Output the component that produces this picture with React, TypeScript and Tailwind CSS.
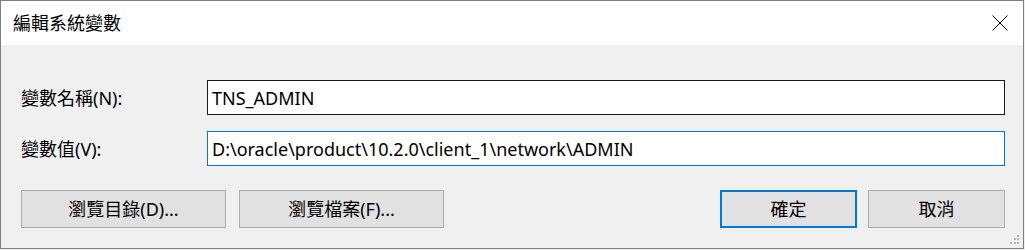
import React from "react";

const FONT = {
  fontFamily: '"Noto Sans", "Noto Sans CJK TC", sans-serif',
};

function CloseIcon() {
  return (
    <svg width="16" height="16" viewBox="0 0 16 16" className="block">
      <path d="M0.5 0.5 L15.5 15.5 M15.5 0.5 L0.5 15.5" stroke="#000" strokeWidth="1" fill="none" />
    </svg>
  );
}

export default function App() {
  const path = "D:\\oracle\\product\\10.2.0\\client_1\\network\\ADMIN";
  return (
    <div className="w-[1025px] h-[250px] bg-[#f0f0f0] text-black" style={FONT}>
      <div className="relative w-[1024px] h-[249px] border border-[#7f7f7f] flex flex-col bg-[#f0f0f0]">
        {/* title bar */}
        <div className="h-[44px] bg-white flex items-center justify-between">
          <div className="pl-[12px] text-[18px] leading-[22px] pt-[0px]">編輯系統變數</div>
          <div className="w-[46px] h-[44px] flex items-center justify-center">
            <CloseIcon />
          </div>
        </div>
        {/* body */}
        <div className="flex-1 pl-[20px] pr-[18px] pt-[35px] flex flex-col">
          <div className="flex items-center h-[35px]">
            <div className="w-[186px] text-[18px] leading-[24px]">變數名稱(N):</div>
            <div className="flex-1 h-[35px] bg-white border border-[#1a1a1a] flex items-center px-[4px] text-[18px] leading-[24px]">
              TNS_ADMIN
            </div>
          </div>
          <div className="flex items-center h-[35px] mt-[16px]">
            <div className="w-[186px] text-[18px] leading-[24px]">變數值(V):</div>
            <div className="flex-1 h-[35px] bg-white border border-[#0078d7] flex items-center px-[4px] text-[18px] leading-[24px]">
              {path}
            </div>
          </div>
          <div className="flex items-center mt-[24px]">
            <button className="w-[205px] h-[38px] bg-[#e1e1e1] border border-[#adadad] text-[18px] leading-[24px]">
              瀏覽目錄(D)...
            </button>
            <button className="w-[205px] h-[38px] ml-[13px] bg-[#e1e1e1] border border-[#adadad] text-[18px] leading-[24px]">
              瀏覽檔案(F)...
            </button>
            <div className="flex-1" />
            <button className="w-[137px] h-[38px] bg-[#e1e1e1] border-2 border-[#0078d7] text-[18px] leading-[24px]">
              確定
            </button>
            <button className="w-[137px] h-[38px] ml-[11px] bg-[#e1e1e1] border border-[#adadad] text-[18px] leading-[24px]">
              取消
            </button>
          </div>
        </div>
        {/* resize grip */}
        <div className="absolute right-[3px] bottom-[3px] w-[10px] h-[10px]">
          <svg width="10" height="10" viewBox="0 0 10 10" className="block">
            <rect x="7" y="0" width="2" height="2" fill="#b5b5b5" />
            <rect x="4" y="3" width="2" height="2" fill="#b5b5b5" />
            <rect x="7" y="3" width="2" height="2" fill="#b5b5b5" />
            <rect x="0" y="7" width="2" height="2" fill="#b5b5b5" />
            <rect x="4" y="7" width="2" height="2" fill="#b5b5b5" />
            <rect x="7" y="7" width="2" height="2" fill="#b5b5b5" />
          </svg>
        </div>
      </div>
    </div>
  );
}
